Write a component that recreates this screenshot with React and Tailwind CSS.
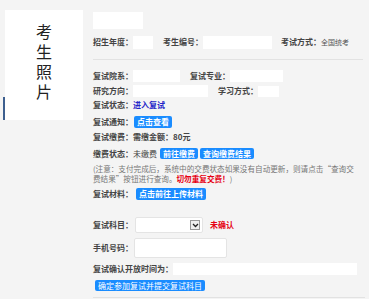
import React from 'react';

const font = { fontFamily: '"Noto Sans CJK SC", "Noto Sans", sans-serif' };

function Label({ children, className = '' }) {
  return <span className={`font-bold text-[#444] ${className}`}>{children}</span>;
}

function Box({ className = '' }) {
  return <span className={`block bg-white ${className}`} />;
}

function BlueButton({ children, className = '' }) {
  return (
    <span className={`inline-flex items-center justify-center rounded-[2px] bg-[#1a8cff] px-[3px] font-bold leading-none text-white ${className}`}>
      {children}
    </span>
  );
}

export default function App() {
  return (
    <div className="flex h-[299px] w-[369px] overflow-hidden bg-[#f4f4f4] text-[8px] leading-none" style={font}>
      {/* photo */}
      <div className="flex shrink-0 items-end">
        <div className="mb-[179px] ml-[3px] h-[23px] w-[2px] bg-[#3d5f8f]" />
        <div className="mb-[179px] flex h-[110px] w-[78px] justify-center bg-white pt-[11px]">
          <p className="w-[16px] break-all text-[16px] leading-[20px] text-[#222]">考生照片</p>
        </div>
      </div>

      {/* info */}
      <div className="ml-[10px] flex w-[272px] flex-col">
        <Box className="mt-[12px] h-[17px] w-[50px]" />

        <div className="mt-[6px] flex h-[14px] items-center">
          <Label>招生年度：</Label>
          <Box className="h-[13px] w-[20px]" />
          <Label className="ml-[10px]">考生编号：</Label>
          <Box className="h-[13px] w-[69px]" />
          <Label className="ml-[9px]">考试方式：</Label>
          <span className="text-[7px] text-[#555]">全国统考</span>
        </div>

        <div className="mt-[10px] h-px w-[270px] bg-[#e2e2e2]" />

        <div className="mt-[9px] flex h-[14px] items-center">
          <Label>复试院系：</Label>
          <Box className="h-[12px] w-[47px]" />
          <Label className="ml-[10px]">复试专业：</Label>
          <Box className="h-[12px] w-[53px]" />
        </div>

        <div className="mt-px flex h-[14px] items-center">
          <Label>研究方向：</Label>
          <Box className="h-[12px] w-[75px]" />
          <Label className="ml-[10px]">学习方式：</Label>
          <Box className="h-[11px] w-[21px]" />
        </div>

        <div className="flex h-[14px] items-center">
          <Label>复试状态：</Label>
          <span className="font-bold text-[#2424c8]">进入复试</span>
        </div>

        <div className="mt-[4px] flex h-[12px] items-center">
          <Label>复试通知：</Label>
          <BlueButton className="ml-[1px] h-[12px]">点击查看</BlueButton>
        </div>

        <div className="mt-[2px] flex h-[14px] items-center">
          <Label>复试缴费：</Label>
          <span className="font-bold text-[#444]">需缴金额：80元</span>
        </div>

        <div className="mt-[3px] flex h-[13px] items-center">
          <Label>缴费状态：</Label>
          <span className="text-[#444]">未缴费</span>
          <BlueButton className="ml-[3px] h-[11px]">前往缴费</BlueButton>
          <BlueButton className="ml-[2px] h-[11px]">查询缴费结果</BlueButton>
        </div>

        <div className="mt-[4px] flex flex-col text-[7.6px] leading-[10px] text-[#777]">
          <span className="whitespace-nowrap">(注意：支付完成后，系统中的交费状态如果没有自动更新，则请点击“查询交</span>
          <span className="whitespace-nowrap">
            费结果”按钮进行查询。<span className="font-bold text-[#e60012]">切勿重复交费！</span>)
          </span>
        </div>

        <div className="mt-[4px] flex h-[12px] items-center">
          <Label>复试材料：</Label>
          <BlueButton className="ml-[3px] h-[12px]">点击前往上传材料</BlueButton>
        </div>

        <div className="mt-[17px] flex h-[16px] items-center">
          <Label>复试科目：</Label>
          <div className="ml-[2px] flex h-[16px] w-[68px] items-center justify-end rounded-[2px] border border-[#e4e4e4] bg-white pr-[2px]">
            <span className="flex h-[10px] w-[10px] items-center justify-center border border-[#999] bg-[#f0f0f0]">
              <svg width="7" height="5" viewBox="0 0 7 5">
                <path d="M1 1 L3.5 3.5 L6 1" fill="none" stroke="#222" strokeWidth="1.3" />
              </svg>
            </span>
          </div>
          <span className="ml-[7px] font-bold text-[#e60012]">未确认</span>
        </div>

        <div className="mt-[5px] flex h-[20px] items-center">
          <Label>手机号码：</Label>
          <div className="ml-[1px] h-[20px] w-[93px] rounded-[2px] border border-[#e4e4e4] bg-white" />
        </div>

        <div className="mt-[4px] flex h-[13px] items-center">
          <Label>复试确认开放时间为：</Label>
          <Box className="h-[12px] w-[184px]" />
        </div>

        <div className="mt-[5px] flex">
          <BlueButton className="ml-[2px] h-[11px] px-[2px] font-normal">确定参加复试并提交复试科目</BlueButton>
        </div>

        <div className="mt-[6px] h-px w-[272px] bg-[#e2e2e2]" />
      </div>
    </div>
  );
}
